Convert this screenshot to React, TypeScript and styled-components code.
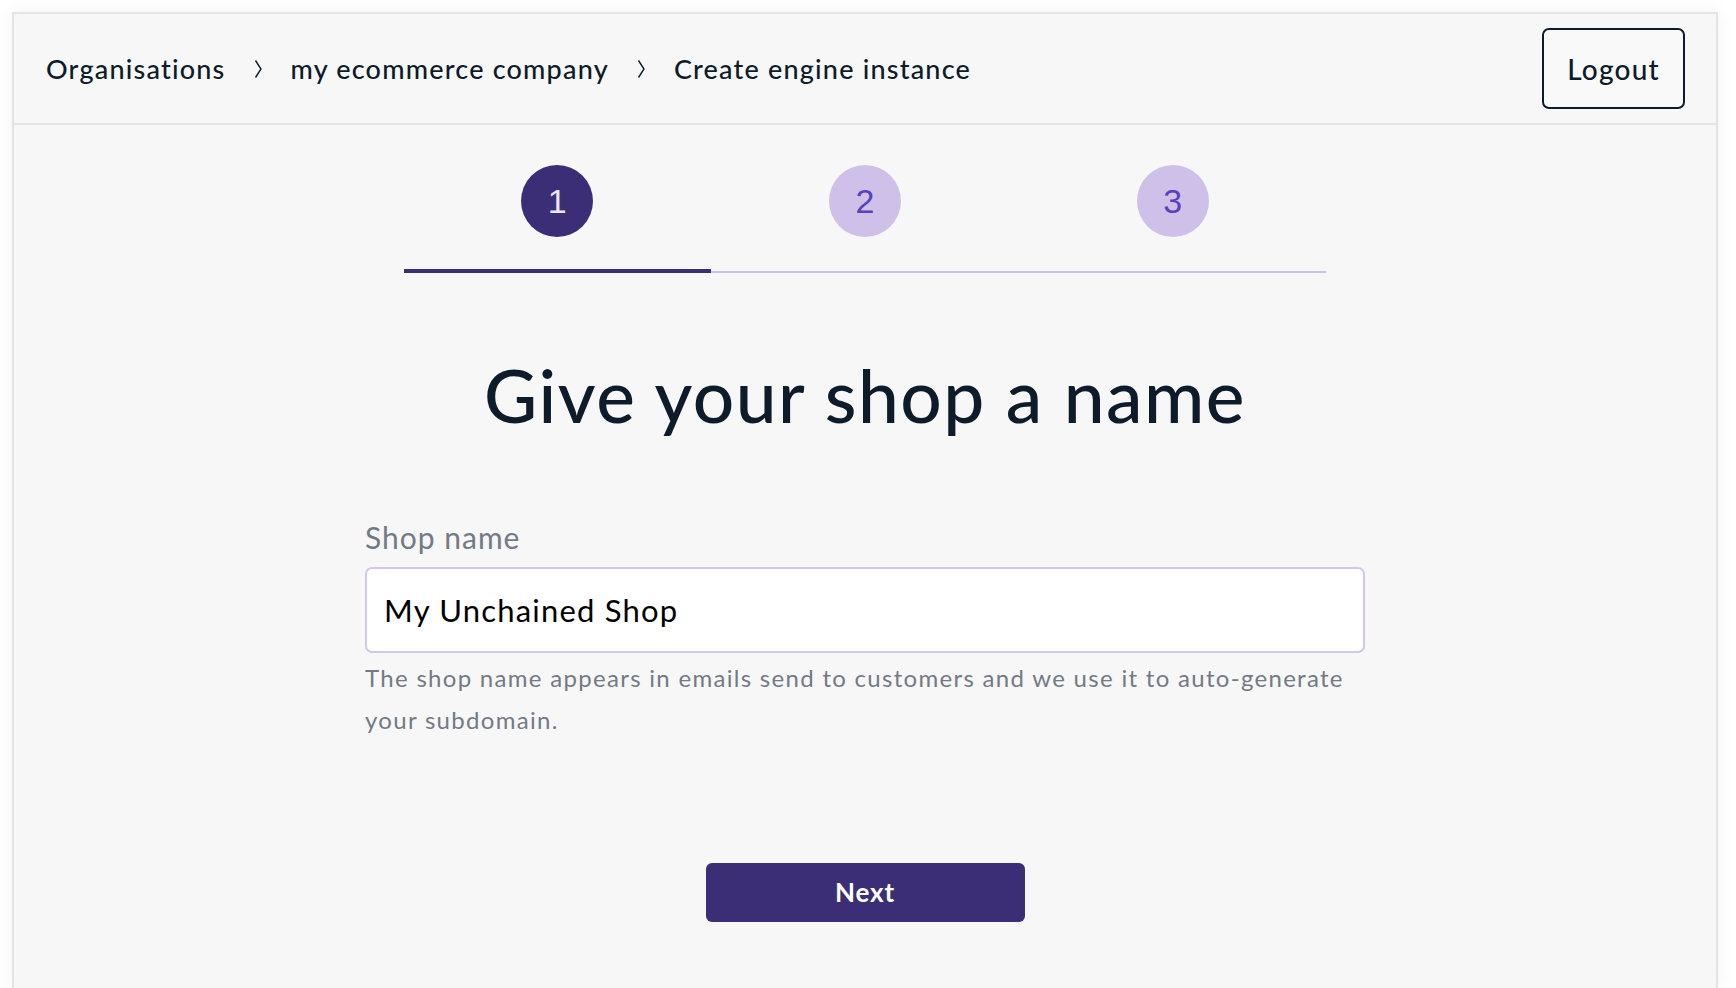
import React from "react"
import styled, { createGlobalStyle } from "styled-components"

const GlobalStyle = createGlobalStyle`
  html, body {
    margin: 0;
    padding: 0;
    background: #ffffff;
    font-family: Lato, "Open Sans", sans-serif;
    overflow: hidden;
  }
`

const Page = styled.div`
  height: 100vh;
  padding: 12px 18px 0 12px;
  box-sizing: border-box;
`

const Card = styled.div`
  height: 100%;
  box-sizing: border-box;
  background: #f7f7f7;
  border: 2px solid #e4e4e6;
  border-bottom: none;
  box-shadow: 0 0 18px rgba(0, 0, 0, 0.05);
`

const Header = styled.header`
  height: 111px;
  box-sizing: border-box;
  border-bottom: 2px solid #e4e4e6;
  display: flex;
  align-items: center;
  justify-content: space-between;
  padding: 0 31px 0 32px;
`

const Crumbs = styled.nav`
  display: flex;
  align-items: center;
  gap: 28px;
`

const Crumb = styled.span`
  font-size: 27px;
  font-weight: 500;
  color: #0d1b2a;
  letter-spacing: 1.2px;
`

const Chevron = () => (
  <svg width="9" height="20" viewBox="0 0 9 20">
    <path d="M1.5 1.5 L7 10 L1.5 18.5" fill="none" stroke="#0d1b2a" strokeWidth="1.4" />
  </svg>
)

const LogoutButton = styled.button`
  width: 143px;
  height: 81px;
  border: 2px solid #0d1b2a;
  border-radius: 7px;
  background: #f9f9f9;
  font-family: Lato, "Open Sans", sans-serif;
  font-size: 28px;
  font-weight: 500;
  color: #0d1b2a;
  letter-spacing: 1.2px;
`

const Main = styled.main`
  display: flex;
  flex-direction: column;
  align-items: center;
  padding-top: 40px;
`

const Stepper = styled.div`
  width: 923px;
  display: grid;
  grid-template-columns: repeat(3, 1fr);
`

const Step = styled.div`
  display: flex;
  flex-direction: column;
  align-items: center;
`

const Circle = styled.div<{ $active: boolean }>`
  width: 72px;
  height: 72px;
  border-radius: 50%;
  display: flex;
  align-items: center;
  justify-content: center;
  background: ${(p) => (p.$active ? "#3b2e76" : "#cfc0ea")};
  color: ${(p) => (p.$active ? "#ece6fb" : "#5a3fc0")};
  font-family: "Liberation Sans", Arial, sans-serif;
  font-size: 34px;
`

const Track = styled.div`
  align-self: stretch;
  height: 4px;
  margin-top: 32px;
  display: flex;
  align-items: flex-end;
`

const TrackFill = styled.div<{ $active: boolean }>`
  width: 100%;
  height: ${(p) => (p.$active ? "4px" : "2px")};
  background: ${(p) => (p.$active ? "#3b2e76" : "#cfc0ea")};
`

const Title = styled.h1`
  margin: 79px 0 0;
  font-size: 73px;
  font-weight: 500;
  color: #0d1b2a;
  letter-spacing: 1.5px;
  line-height: 1.2;
`

const Form = styled.div`
  width: 1000px;
  margin-top: 79px;
  display: flex;
  flex-direction: column;
`

const Label = styled.label`
  font-size: 30px;
  color: #737a86;
  margin-bottom: 12px;
  letter-spacing: 1px;
`

const Input = styled.input`
  height: 86px;
  box-sizing: border-box;
  border: 2px solid #d3c6ec;
  border-radius: 7px;
  background: #ffffff;
  padding: 0 17px;
  font-family: Lato, "Open Sans", sans-serif;
  font-size: 31px;
  color: #000000;
  letter-spacing: 1.2px;
  outline: none;
`

const Help = styled.p`
  margin: 4px 0 0;
  font-size: 24px;
  line-height: 42px;
  color: #737a86;
  letter-spacing: 1.3px;
`

const NextButton = styled.button`
  margin-top: 122px;
  width: 319px;
  height: 59px;
  border: none;
  border-radius: 6px;
  background: #3b2e76;
  color: #ffffff;
  font-family: Lato, "Open Sans", sans-serif;
  font-size: 26px;
  font-weight: 700;
  letter-spacing: 0.8px;
`

const steps = [1, 2, 3]

export default function App() {
  return (
    <>
      <GlobalStyle />
      <Page>
        <Card>
          <Header>
            <Crumbs>
              <Crumb>Organisations</Crumb>
              <Chevron />
              <Crumb>my ecommerce company</Crumb>
              <Chevron />
              <Crumb>Create engine instance</Crumb>
            </Crumbs>
            <LogoutButton>Logout</LogoutButton>
          </Header>
          <Main>
            <Stepper>
              {steps.map((n) => (
                <Step key={n}>
                  <Circle $active={n === 1}>{n}</Circle>
                  <Track>
                    <TrackFill $active={n === 1} />
                  </Track>
                </Step>
              ))}
            </Stepper>
            <Title>Give your shop a name</Title>
            <Form>
              <Label>Shop name</Label>
              <Input defaultValue="My Unchained Shop" />
              <Help>
                The shop name appears in emails send to customers and we use it to auto-generate
                your subdomain.
              </Help>
            </Form>
            <NextButton>Next</NextButton>
          </Main>
        </Card>
      </Page>
    </>
  )
}
